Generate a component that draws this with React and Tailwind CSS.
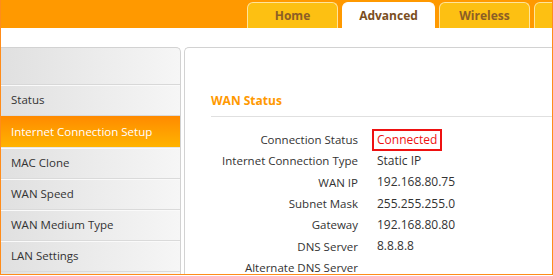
import React from "react";

const font = { fontFamily: '"Open Sans", "Liberation Sans", sans-serif' };

function Tab({ label, active, w }) {
  return (
    <div
      className={`h-[26px] ${w} shrink-0 rounded-t-[6px] border border-b-0 flex items-center justify-center text-[12px] font-bold ${
        active
          ? "bg-white border-white text-[#7a4e1e]"
          : "bg-[#fdc012] border-[#ffe49a] text-[#8c5e26]"
      }`}
    >
      {label}
    </div>
  );
}

const menu = [
  "Status",
  "Internet Connection Setup",
  "MAC Clone",
  "WAN Speed",
  "WAN Medium Type",
  "LAN Settings",
];

const rows = [
  ["Connection Status", "Connected"],
  ["Internet Connection Type", "Static IP"],
  ["WAN IP", "192.168.80.75"],
  ["Subnet Mask", "255.255.255.0"],
  ["Gateway", "192.168.80.80"],
  ["DNS Server", "8.8.8.8"],
  ["Alternate DNS Server", ""],
];

export default function App() {
  return (
    <div className="w-[553px] h-[276px] bg-white overflow-hidden" style={font}>
      <div className="w-[553px] h-[275px] border border-t-0 border-[#ff8c1a] overflow-hidden flex flex-col">
        {/* header */}
        <div className="h-[28px] shrink-0 bg-[#ff9900] flex items-end pl-[246px] gap-[4px]">
          <Tab label="Home" w="w-[91px]" />
          <Tab label="Advanced" active w="w-[93px]" />
          <Tab label="Wireless" w="w-[91px]" />
          <Tab label="" w="w-[60px]" />
        </div>
        <div className="h-[19px] shrink-0 bg-white" />
        {/* body */}
        <div className="flex-1 flex gap-[3px] min-h-0">
          {/* sidebar */}
          <div className="w-[180px] shrink-0 rounded-tr-[5px] border-t border-r border-[#d2d2d2] bg-gradient-to-r from-[#e0e0e0] to-[#f6f6f6] flex flex-col">
            <div className="h-[37px] border-b border-[#d8d8d8]" />
            {menu.map((m, i) =>
              i === 1 ? (
                <div
                  key={m}
                  className="h-[32px] flex items-center pl-[10px] text-[11.5px] text-white bg-gradient-to-b from-[#ff8a00] to-[#ffb300] border-b border-[#e6e6e6]"
                >
                  {m}
                </div>
              ) : (
                <div
                  key={m}
                  className="h-[31px] flex items-center pl-[10px] text-[11.5px] text-[#333] border-b border-[#dadada] shadow-[inset_0_1px_0_#fafafa]"
                >
                  {m}
                </div>
              )
            )}
          </div>
          {/* content */}
          <div className="flex-1 rounded-tl-[5px] border-t border-l border-[#d2d2d2] bg-white pl-[26px]">
            <div className="pt-[45px] pb-[7px] border-b border-[#e0e0e0] text-[12px] font-bold text-[#ff9900] leading-[16px]">
              WAN Status
            </div>
            <div className="mt-[12px] grid grid-cols-[147px_1fr] gap-x-[19px]">
              {rows.map(([k, v]) => (
                <React.Fragment key={k}>
                  <div className="h-[21.3px] flex items-center justify-end text-[11.5px] text-[#333]">
                    {k}
                  </div>
                  <div className="h-[21.3px] flex items-center text-[12px] text-[#333]">
                    {v === "Connected" ? (
                      <span className="-ml-[5px] h-[22px] px-[3px] flex items-center border-2 border-[#ee1111] text-[#ee1111]">
                        {v}
                      </span>
                    ) : (
                      v
                    )}
                  </div>
                </React.Fragment>
              ))}
            </div>
          </div>
        </div>
      </div>
    </div>
  );
}
